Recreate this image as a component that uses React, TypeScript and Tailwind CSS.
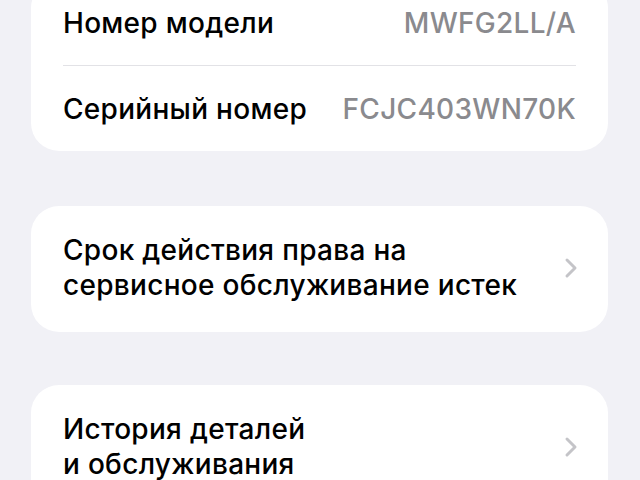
import React from 'react'

const font = { fontFamily: 'Inter, "Noto Sans", sans-serif' }

function Chevron() {
  return (
    <svg width="14" height="22" viewBox="0 0 14 22" fill="none" className="shrink-0">
      <path d="M3 3l8 8-8 8" stroke="#c4c4c8" strokeWidth="3" strokeLinecap="round" strokeLinejoin="round" />
    </svg>
  )
}

function InfoRow({ label, value }: { label: string; value: string }) {
  return (
    <div className="flex items-center justify-between pt-[26px] pb-[24px] leading-[35px]">
      <span className="text-black">{label}</span>
      <span className="text-[#8a8a8e]">{value}</span>
    </div>
  )
}

function LinkCard({ lines, className = '' }: { lines: string[]; className?: string }) {
  return (
    <div className={`flex items-center justify-between rounded-[28px] bg-white pl-[32px] pr-[30px] pt-[27px] pb-[29px] ${className}`}>
      <div className="leading-[35px] text-black">
        {lines.map((l) => (
          <div key={l}>{l}</div>
        ))}
      </div>
      <Chevron />
    </div>
  )
}

export default function App() {
  return (
    <div className="h-[480px] overflow-hidden bg-[#f1f1f6] pl-[31px] pr-[32px] text-[28px] font-medium tracking-[0.3px]" style={font}>
      {/* Device info card (top cut off) */}
      <div className="-mt-[20px] rounded-[28px] bg-white px-[32px]">
        <InfoRow label="Номер модели" value="MWFG2LL/A" />
        <div className="h-px bg-[#e2e2e6]" />
        <InfoRow label="Серийный номер" value="FCJC403WN70K" />
      </div>

      <LinkCard className="mt-[55px]" lines={['Срок действия права на', 'сервисное обслуживание истек']} />

      <LinkCard className="mt-[53px]" lines={['История деталей', 'и обслуживания']} />
    </div>
  )
}
